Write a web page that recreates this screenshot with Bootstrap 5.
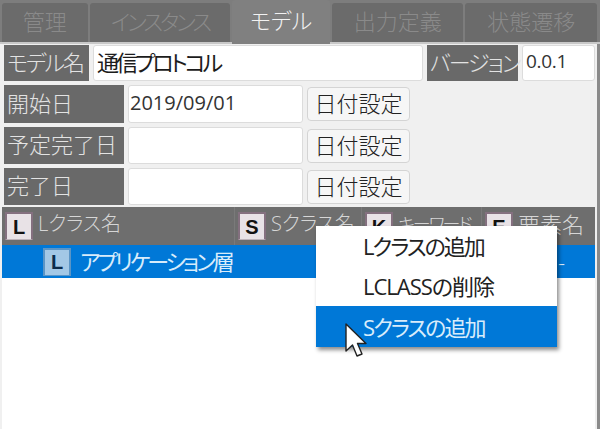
<!DOCTYPE html>
<html lang="ja">
<head>
  <meta charset="UTF-8">
  <title>モデル</title>
  <link href="https://cdn.jsdelivr.net/npm/bootstrap@5.3.0/dist/css/bootstrap.min.css" rel="stylesheet">
  <style>
    html, body { height: 429px; overflow: hidden; }
    body {
      margin: 0;
      background: #f0f0f0;
      font-family: "Open Sans", "Noto Sans CJK JP", sans-serif;
      font-size: 22px;
      font-weight: 300;
      font-feature-settings: "palt";
      color: #222;
      position: relative;
    }
    .app { height: 429px; display: flex; flex-direction: column; }
    .tab-strip { height: 44px; background: #7d7d7d; padding: 3px 3px 0 2px; gap: 2px; border-bottom: 2px solid #c8c8c8; }
    .tab-item {
      background: #6b6b6b; color: #8a8a8a; border-radius: 3px 3px 0 0;
      display: flex; align-items: center; justify-content: center;
      line-height: 1; padding-bottom: 4px; white-space: nowrap;
    }
    .tab-on { background: #808080; color: #f2f2f2; margin-top: -3px; height: 44px; }
    .w-kanri { width: 86px; } .w-inst { width: 141px; letter-spacing: -3px; } .w-model { width: 98px; } .w-out { width: 132px; } .w-state { width: 132px; }
    .form-line { padding-left: 4px; gap: 4px; margin-top: 3px; }
    .form-line + .form-line { margin-top: 4px; }
    .line-a { height: 36px; margin-top: 1px; }
    .line-b { height: 38px; }
    .line-c { height: 37px; }
    .field-name {
      background: #696969; color: #e3e3e3; height: 100%;
      display: flex; align-items: center; padding: 0 0 3px 3px; line-height: 1; white-space: nowrap;
    }
    .name-s { width: 85px; letter-spacing: -2px; } .name-l { width: 120px; } .name-v { width: 91px; letter-spacing: -2px; }
    .field-box {
      background: #fff; height: 100%; border: 1px solid #dcdcdc; border-radius: 3px;
      display: flex; align-items: center; padding: 0 0 3px 3px; line-height: 1; white-space: nowrap; color: #1c1c1c; font-weight: 400;
    }
    .box-title { width: 330px; letter-spacing: -3px; }
    .box-ver { width: 73px; font-size: 19px; letter-spacing: -.3px; color: #333; }
    .box-date { width: 175px; font-size: 20px; padding: 0 0 2px 1px; color: #333; }
    .date-btn {
      width: 103px; height: 34px; padding: 0 0 2px; background: #f6f6f6; border: 1px solid #d4d4d4; border-radius: 4px;
      font-size: 22px; font-weight: 300; line-height: 1; color: #222;
    }
    .grid-head { height: 38px; margin-top: 2px; background: #6e6e6e; color: #d6d6d6; margin-left: 2px; margin-right: 5px; }
    .head-cell { display: flex; align-items: center; height: 100%; border-right: 1px solid #7a7a7a; padding-left: 3px; gap: 5px; font-size: 20px; line-height: 1; white-space: nowrap; overflow: hidden; }
    .col-one { width: 233px; } .col-two { width: 127px; } .col-three { width: 120px; letter-spacing: -2px; font-size: 18px; } .col-four { flex: 1; border-right: 0; font-size: 22px; }
    .head-text { padding-bottom: 4px; }
    .letter-icon {
      width: 28px; height: 28px; flex: none; background: #e8e2e6; color: #111;
      border: 2px solid #84707f; border-bottom: 1px solid #bdb3ba;
      display: flex; align-items: center; justify-content: center; letter-spacing: 0;
      font: 700 20px/1 "Liberation Sans", sans-serif;
    }
    .grid-row { height: 33px; background: #0078d7; color: #d8ecfb; margin-left: 2px; margin-right: 5px; }
    .row-tree { padding-left: 41px; gap: 9px; line-height: 1; white-space: nowrap; display: flex; align-items: center; height: 100%; }
    .row-tree .letter-icon { background: #a3c8e6; color: #0b2c4c; border-color: #5b95c6; }
    .row-label { letter-spacing: -3px; font-weight: 400; padding-bottom: 2px; }
    .row-dash { margin-left: auto; margin-right: 30px; line-height: 1; }
    .grid-body { flex: 1; background: #fff; margin-left: 2px; margin-right: 5px; }
    .side-bar { position: absolute; right: 0; top: 44px; bottom: 0; width: 3px; background: #8a8a8a; }
    .side-bar-low { position: absolute; right: 3px; top: 207px; bottom: 0; width: 2px; background: #efefef; }
    .ctx-menu {
      position: absolute; left: 316px; top: 226px; width: 241px; height: 121px;
      background: #fff; box-shadow: 2px 3px 4px rgba(0,0,0,.45); line-height: 1; color: #222; font-weight: 400;
    }
    .ctx-item { height: 40px; display: flex; align-items: center; padding-left: 47px; white-space: nowrap; letter-spacing: -2px; }
    .ctx-wide { letter-spacing: -1px; }
    .ctx-on { background: #0078d7; color: #d8ecfb; height: 41px; }
    .mouse-arrow { position: absolute; left: 344px; top: 323px; }
  </style>
</head>
<body>
  <div class="app">
    <div class="tab-strip d-flex">
      <div class="tab-item w-kanri">管理</div>
      <div class="tab-item w-inst">インスタンス</div>
      <div class="tab-item tab-on w-model">モデル</div>
      <div class="tab-item w-out">出力定義</div>
      <div class="tab-item w-state">状態遷移</div>
    </div>

    <div class="form-line line-a d-flex">
      <div class="field-name name-s">モデル名</div>
      <div class="field-box box-title">通信プロトコル</div>
      <div class="field-name name-v">バージョン</div>
      <div class="field-box box-ver">0.0.1</div>
    </div>
    <div class="form-line line-b d-flex align-items-center">
      <div class="field-name name-l">開始日</div>
      <div class="field-box box-date">2019/09/01</div>
      <button type="button" class="btn date-btn">日付設定</button>
    </div>
    <div class="form-line line-c d-flex align-items-center">
      <div class="field-name name-l">予定完了日</div>
      <div class="field-box box-date"></div>
      <button type="button" class="btn date-btn">日付設定</button>
    </div>
    <div class="form-line line-c d-flex align-items-center">
      <div class="field-name name-l">完了日</div>
      <div class="field-box box-date"></div>
      <button type="button" class="btn date-btn">日付設定</button>
    </div>

    <div class="grid-head d-flex">
      <div class="head-cell col-one"><span class="letter-icon">L</span><span class="head-text">Lクラス名</span></div>
      <div class="head-cell col-two"><span class="letter-icon">S</span><span class="head-text">Sクラス名</span></div>
      <div class="head-cell col-three"><span class="letter-icon">K</span><span class="head-text">キーワード</span></div>
      <div class="head-cell col-four"><span class="letter-icon">E</span><span class="head-text">要素名</span></div>
    </div>
    <div class="grid-row">
      <div class="row-tree"><span class="letter-icon">L</span><span class="row-label">アプリケーション層</span><span class="row-dash">-</span></div>
    </div>
    <div class="grid-body"></div>
  </div>

  <div class="side-bar"></div>
  <div class="side-bar-low"></div>

  <div class="ctx-menu">
    <div class="ctx-item">Lクラスの追加</div>
    <div class="ctx-item ctx-wide">LCLASSの削除</div>
    <div class="ctx-item ctx-on">Sクラスの追加</div>
  </div>

  <svg class="mouse-arrow" width="24" height="36" viewBox="0 0 24 36">
    <path d="M2 1 L2 28 L8.5 22 L13 33 L18 31 L13.5 20.5 L22 20.5 Z" fill="#fff" stroke="#222" stroke-width="1.4" stroke-linejoin="round"/>
  </svg>

  <script src="https://cdn.jsdelivr.net/npm/bootstrap@5.3.0/dist/js/bootstrap.bundle.min.js"></script>
</body>
</html>
